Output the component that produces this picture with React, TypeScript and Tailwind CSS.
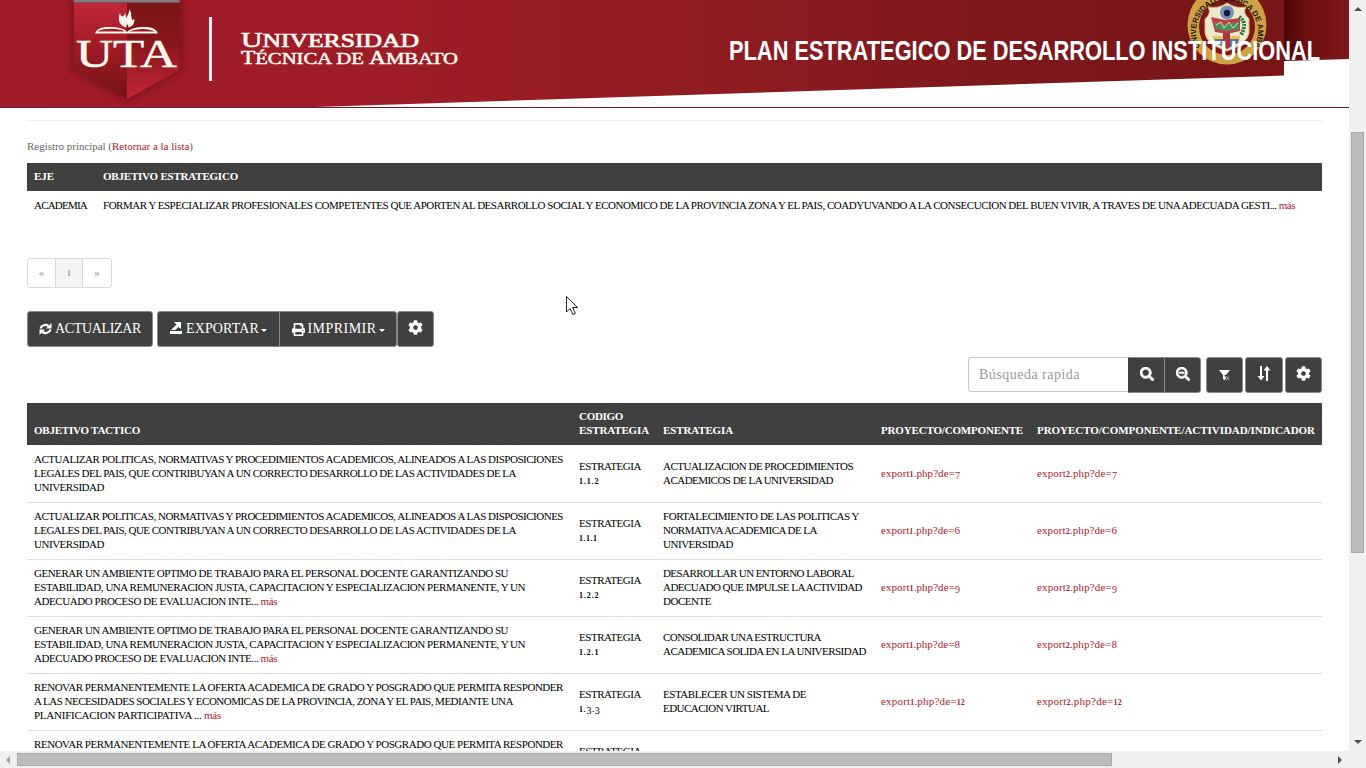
import { useLayoutEffect, useRef, useState } from 'react';
import type { ReactNode } from 'react';
import { FaCog, FaPrint, FaSearch, FaSearchMinus } from 'react-icons/fa';

/* Single text line tracked so that it occupies exactly `w` pixels. */
function Line({ w, children, className = '' }: { w: number; children: ReactNode; className?: string }) {
  const ref = useRef<HTMLSpanElement>(null);
  const [gap, setGap] = useState(0);
  useLayoutEffect(() => {
    const el = ref.current;
    if (!el) return;
    const count = (el.textContent || '').length;
    setGap((w - el.getBoundingClientRect().width) / count);
  }, [w]);
  return (
    <span className={`block whitespace-nowrap ${className}`}>
      <span ref={ref} style={{ letterSpacing: gap }}>{children}</span>
    </span>
  );
}

/* Old-style figures: 0-2 are x-height, 3-5, 7 and 9 hang below the baseline. */
function Figures({ text }: { text: string }) {
  return (
    <>
      {text.split('').map((c, i) => {
        if (/[012]/.test(c)) return <span key={i} className="text-[8px] font-bold">{c}</span>;
        if (/[34579]/.test(c)) return <span key={i} className="relative top-[2px] text-[10px]">{c}</span>;
        return <span key={i}>{c}</span>;
      })}
    </>
  );
}

const More = () => <a className="text-[#b3182d]">más</a>;

type L = [string, number, boolean?];
interface Row { goal: L[]; code: string; strategy: L[]; id: string }

const politicas: L[] = [
  ['ACTUALIZAR POLITICAS, NORMATIVAS Y PROCEDIMIENTOS ACADEMICOS, ALINEADOS A LAS DISPOSICIONES', 529],
  ['LEGALES DEL PAIS, QUE CONTRIBUYAN A UN CORRECTO DESARROLLO DE LAS ACTIVIDADES DE LA', 482],
  ['UNIVERSIDAD', 70],
];
const ambiente: L[] = [
  ['GENERAR UN AMBIENTE OPTIMO DE TRABAJO PARA EL PERSONAL DOCENTE GARANTIZANDO SU', 474],
  ['ESTABILIDAD, UNA REMUNERACION JUSTA, CAPACITACION Y ESPECIALIZACION PERMANENTE, Y UN', 491],
  ['ADECUADO PROCESO DE EVALUACION INTE... ', 243, true],
];
const oferta: L[] = [
  ['RENOVAR PERMANENTEMENTE LA OFERTA ACADEMICA DE GRADO Y POSGRADO QUE PERMITA RESPONDER', 529],
  ['A LAS NECESIDADES SOCIALES Y ECONOMICAS DE LA PROVINCIA, ZONA Y EL PAIS, MEDIANTE UNA', 479],
  ['PLANIFICACION PARTICIPATIVA ... ', 187, true],
];

const rows: Row[] = [
  { goal: politicas, code: '1.1.2', id: '7', strategy: [['ACTUALIZACION DE PROCEDIMIENTOS', 190], ['ACADEMICOS DE LA UNIVERSIDAD', 170]] },
  { goal: politicas, code: '1.1.1', id: '6', strategy: [['FORTALECIMIENTO DE LAS POLITICAS Y', 196], ['NORMATIVA ACADEMICA DE LA', 154], ['UNIVERSIDAD', 70]] },
  { goal: ambiente, code: '1.2.2', id: '9', strategy: [['DESARROLLAR UN ENTORNO LABORAL', 191], ['ADECUADO QUE IMPULSE LA ACTIVIDAD', 199], ['DOCENTE', 48]] },
  { goal: ambiente, code: '1.2.1', id: '8', strategy: [['CONSOLIDAR UNA ESTRUCTURA', 158], ['ACADEMICA SOLIDA EN LA UNIVERSIDAD', 203]] },
  { goal: oferta, code: '1.3.3', id: '12', strategy: [['ESTABLECER UN SISTEMA DE', 143], ['EDUCACION VIRTUAL', 106]] },
  { goal: oferta, code: '1.3.2', id: '11', strategy: [] },
];

function Banner() {
  return (
    <svg width="1349" height="108" viewBox="0 0 1349 108" className="block shrink-0">
      <defs>
        <linearGradient id="bg" x1="0" x2="1">
          <stop offset="0" stopColor="#a01b28" />
          <stop offset=".3" stopColor="#9e1c27" />
          <stop offset=".52" stopColor="#921c22" />
          <stop offset=".8" stopColor="#7c181b" />
          <stop offset="1" stopColor="#781517" />
        </linearGradient>
        <linearGradient id="edge" x1="0" x2="1">
          <stop offset="0" stopColor="#4c0506" />
          <stop offset=".35" stopColor="#6d1012" />
          <stop offset="1" stopColor="#7d1719" />
        </linearGradient>
        <linearGradient id="sl" x1="0" x2="0" y1="0" y2="1">
          <stop offset="0" stopColor="#c22636" />
          <stop offset=".5" stopColor="#9d1a25" />
          <stop offset="1" stopColor="#741416" />
        </linearGradient>
        <linearGradient id="sr" x1="0" x2="0" y1="0" y2="1">
          <stop offset="0" stopColor="#7a1515" />
          <stop offset=".45" stopColor="#8b161d" />
          <stop offset="1" stopColor="#c42638" />
        </linearGradient>
        <filter id="shade" x="-20%" y="-20%" width="140%" height="140%"><feGaussianBlur stdDeviation="3" /></filter>
        <path id="ring" d="M1200 47A31 31 0 1 1 1254 47" />
      </defs>
      <rect width="1349" height="108" fill="#fff" />
      <path d="M0 0H1284V75.5L300 107.5H0Z" fill="url(#bg)" />
      <path d="M1284 0H1349V59L1284 61Z" fill="url(#edge)" />
      <rect y="107" width="1349" height="1" fill="#701a2a" />
      <path d="M72 0H182V70L127 101L72 70Z" fill="#5c0d12" opacity=".6" filter="url(#shade)" />
      <path d="M74 3H127V99L74 70Z" fill="url(#sl)" />
      <path d="M127 3H179.500V70L127 99Z" fill="url(#sr)" />
      <rect x="74" width="105.500" height="2.500" fill="#827d86" />
      <g fill="#fff8ee">
        <path d="M95 33.500C97 29 101 27 108 27C117 27 124 28 127 32C131 28 137 27 145 27C152 27 156 29 158 33.500Z" />
        <path d="M98 31C105 28 119 28 125 31.500H98ZM129 31.500C137 28 149 28 155 31.500Z" fill="#9d1d26" />
        <path d="M120 13C117 20 120 26 126 27.500C128 23 126 17 125 13C124 17 121 18 120 13Z" />
        <path d="M129 9C130 14 125 17 126 22C127 25 130 27 130 27C132 24 133 20 131 16C132 13 130 11 129 9Z" />
        <path d="M134.500 19C130 21 128 25 128.500 27.500C134 26 134 23 134.500 19Z" />
      </g>
      <g fill="#fff8ee" fontFamily="'Liberation Serif', serif">
        <text x="76" y="66.500" fontSize="39" stroke="#fff8ee" strokeWidth=".5" textLength="101" lengthAdjust="spacingAndGlyphs">UTA</text>
        <rect x="209" y="17" width="3" height="64" />
        <g stroke="#fff8ee" strokeWidth=".7">
          <text x="241" y="46.500" fontSize="22" textLength="178" lengthAdjust="spacingAndGlyphs">U<tspan fontSize="19">NIVERSIDAD</tspan></text>
          <text x="241" y="64" fontSize="18" strokeWidth=".5" textLength="217" lengthAdjust="spacingAndGlyphs">T<tspan fontSize="16">ÉCNICA DE </tspan>A<tspan fontSize="16">MBATO</tspan></text>
        </g>
      </g>
      <circle cx="1227" cy="25" r="39.500" fill="#d0a044" />
      <circle cx="1227" cy="27" r="28" fill="#7d1719" />
      <text fontFamily="'Liberation Sans', sans-serif" fontSize="7.800" fontWeight="bold" fill="#20170d">
        <textPath href="#ring">UNIVERSIDAD TECNICA DE AMBATO</textPath>
      </text>
      <path d="M1208 7Q1219 9 1227 3Q1236 9 1246 7Q1242 12 1249 19V33Q1247 44 1227 51Q1206 44 1205 33V19Q1212 13 1208 7Z" fill="#eee8ce" stroke="#d5bd68" />
      <circle cx="1227" cy="12.500" r="7" fill="#7890bd" />
      <circle cx="1227" cy="13" r="3.200" fill="#101c3c" />
      <path d="M1211 17L1225 20L1240 18V31L1227 34L1215 32Z" fill="#bb4145" />
      <path d="M1214 22L1224 25L1239 22V29L1226 31L1216 29Z" fill="#489260" />
      <path d="M1216 25L1221 22L1224 28L1229 22L1233 28L1238 23" fill="none" stroke="#d3e0cc" />
      <path d="M1239 17Q1248 22 1241 35" stroke="#2a7840" strokeWidth="4" strokeDasharray="2 1" fill="none" />
      <path d="M1213 36H1240L1238 43L1227 49L1216 43Z" fill="#596da8" />
      <path d="M1213 36H1240V39H1213Z" fill="#e5c942" />
      <path d="M1223 33H1230V46L1227 49L1223 46Z" fill="#a7343d" />
      <text x="729" y="60" fontFamily="'Liberation Sans Narrow', 'Liberation Sans', sans-serif" fontSize="28" fontWeight="bold" fill="#fff" textLength="591" lengthAdjust="spacingAndGlyphs">PLAN ESTRATEGICO DE DESARROLLO INSTITUCIONAL</text>
    </svg>
  );
}

const dark = 'flex items-center justify-center border border-[#8a8a8a] bg-[#404040] text-white';

function Caret() {
  return <span className="ml-[2px] mt-[2px] border-x-[3px] border-t-[3px] border-x-transparent border-t-white" />;
}

function Toolbar() {
  return (
    <div className="mt-[23px] flex h-9 text-[14px] leading-none">
      <button className={`${dark} w-[126px] rounded-[3px]`}>
        <svg width="13" height="12" viewBox="0 0 13 12" className="mr-[3px]">
          <path d="M1.500 5.500A5 4.500 0 0 1 9.500 3M11.500 6.500A5 4.500 0 0 1 3.500 9" fill="none" stroke="currentColor" strokeWidth="2.200" />
          <path d="M12.500 0V5.500H7ZM.5 12V6.500H6Z" fill="currentColor" />
        </svg>
        <Line w={86}>ACTUALIZAR</Line>
      </button>
      <button className={`${dark} ml-1 w-[123px] rounded-l-[3px]`}>
        <svg width="12" height="12" viewBox="0 0 12 12" className="mb-[3px] mr-[4px]" fill="currentColor">
          <path d="M0 9H12V12H0ZM4 0H11V7L8.800 5L5 8H1L6.500 2.500Z" />
        </svg>
        <Line w={73}>EXPORTAR</Line><Caret />
      </button>
      <button className={`${dark} -ml-px w-[118px] rounded-r-[3px]`}>
        <FaPrint size={13} className="mr-[3px]" /><Line w={69}>IMPRIMIR</Line><Caret />
      </button>
      <button className={`${dark} w-[37px] rounded-[3px] pb-[3px]`}><FaCog size={15} /></button>
    </div>
  );
}

function SearchBar() {
  return (
    <div className="mt-[10px] flex h-9 justify-end">
      <div className="flex h-[35px] w-[160px] items-center rounded-l-[3px] border border-r-0 border-[#c8c8c8] pl-[10px] text-[14px] text-[#999]">
        <Line w={101}>Búsqueda rapida</Line>
      </div>
      <button className={`${dark} w-[37px] border-l-[#404040] pb-[3px]`}><FaSearch size={14} stroke="currentColor" strokeWidth={24} /></button>
      <button className={`${dark} -ml-px w-[37px] rounded-r-[3px] pb-[3px]`}><FaSearchMinus size={14} stroke="currentColor" strokeWidth={24} /></button>
      <button className={`${dark} ml-[5px] w-[37px] rounded-[3px]`}>
        <svg width="13" height="13" viewBox="0 0 13 13" fill="currentColor">
          <path d="M1 1H12L8 6V12L5 10V6Z" />
          <path d="M7 6L11 12M11 6.500L7 11.500" stroke="#404040" strokeWidth="1.500" />
          <path d="M8 7L11 11M11 7.500L8 11.500" stroke="#ddd" strokeWidth=".7" />
        </svg>
      </button>
      <button className={`${dark} ml-[2px] w-[38px] rounded-[3px] pb-[3px]`}>
        <svg width="14" height="15" viewBox="0 0 14 15" fill="currentColor">
          <path d="M3 0H5V10H7.500L4 14.500L.5 10H3ZM9 15H11V4.500H13.500L10 0L6.500 4.500H9Z" />
        </svg>
      </button>
      <button className={`${dark} ml-[2px] w-[37px] rounded-[3px] pb-[3px]`}><FaCog size={15} /></button>
    </div>
  );
}

const cols = 'grid grid-cols-[545px_84px_218px_156px_292px]';

function Lines({ items }: { items: L[] }) {
  return <>{items.map(([t, w, more]) => <Line key={t} w={w}>{t}{more && <More />}</Line>)}</>;
}

export default function App() {
  return (
    <div className="relative flex h-[768px] w-[1366px] flex-col overflow-hidden bg-white font-['Liberation_Serif','Noto_Serif',serif] text-[11px] leading-[14px] text-black">
      <div className="flex min-h-0 flex-1">
        <main className="h-[751px] w-[1349px] overflow-hidden">
          <Banner />
          <div className="ml-[27px] w-[1295px]">
            <div className="mt-[12px] border-t border-[#eee]" />
            <div className="mt-[18px] text-[#666]">
              <Line w={166}>Registro principal (<a className="text-[#b3182d]">Retornar a la lista</a>)</Line>
            </div>
            <div className="mt-[10px] flex h-7 items-center bg-[#404040] pb-[2px] pl-[7px] font-bold text-white">
              <div className="w-[69px]"><Line w={20}>EJE</Line></div>
              <Line w={135}>OBJETIVO ESTRATEGICO</Line>
            </div>
            <div className="flex h-7 items-center pl-[7px]">
              <div className="w-[69px]"><Line w={53}>ACADEMIA</Line></div>
              <Line w={1192}>FORMAR Y ESPECIALIZAR PROFESIONALES COMPETENTES QUE APORTEN AL DESARROLLO SOCIAL Y ECONOMICO DE LA PROVINCIA ZONA Y EL PAIS, COADYUVANDO A LA CONSECUCION DEL BUEN VIVIR, A TRAVES DE UNA ADECUADA GESTI... <More /></Line>
            </div>
            <div className="mt-[39px] flex h-[30px] w-[85px] rounded-[3px] border border-[#d9d9d9] text-[#999]">
              <span className="flex w-[27px] items-center justify-center pb-[2px]">«</span>
              <span className="flex w-[28px] items-center justify-center border-x border-[#d9d9d9] bg-[#f4f4f4] pt-[2px] text-[8px] font-bold">1</span>
              <span className="flex w-[28px] items-center justify-center pb-[2px]">»</span>
            </div>
            <Toolbar />
            <SearchBar />
            <div className={`${cols} mt-[10px] h-[42px] items-end bg-[#404040] pb-[8px] font-bold text-white`}>
              <div className="pl-[7px]"><Line w={106}>OBJETIVO TACTICO</Line></div>
              <div className="pl-[7px]"><Line w={44}>CODIGO</Line><Line w={70}>ESTRATEGIA</Line></div>
              <div className="pl-[7px]"><Line w={70}>ESTRATEGIA</Line></div>
              <div className="pl-[7px]"><Line w={142}>PROYECTO/COMPONENTE</Line></div>
              <div className="pl-[7px]"><Line w={278}>PROYECTO/COMPONENTE/ACTIVIDAD/INDICADOR</Line></div>
            </div>
            {rows.map((r, i) => (
              <div key={i} className={`${cols} h-[57px] items-center border-t pb-[2px] ${i ? 'border-[#ddd]' : 'border-transparent'}`}>
                <div className="pl-[7px]"><Lines items={r.goal} /></div>
                <div className="pl-[7px] pt-[2px]">
                  <Line w={62}>ESTRATEGIA</Line>
                  <Line w={r.code === '1.1.1' ? 18 : r.code === '1.3.3' ? 21 : 20}><Figures text={r.code} /></Line>
                </div>
                <div className="pl-[7px]"><Lines items={r.strategy} /></div>
                {['1', '2'].map((n) => (
                  <div key={n} className="pl-[7px] pt-[2px] text-[#b3182d]">
                    <Line w={(r.id.length > 1 ? 84 : 79) + (n === '2' ? 1 : 0)}>export<Figures text={n} />.php?de=<Figures text={r.id} /></Line>
                  </div>
                ))}
              </div>
            ))}
          </div>
        </main>
        <div className="flex w-[17px] flex-col items-center bg-[#f0f0f0]">
          <span className="mt-[7px] border-x-4 border-b-4 border-x-transparent border-b-[#505050]" />
          <span className="mt-[121px] h-[421px] w-[13px] border border-[#a8a8a8] bg-[#bcbcbc]" />
          <span className="mt-[187px] border-x-4 border-t-4 border-x-transparent border-t-[#505050]" />
        </div>
      </div>
      <div className="flex h-[17px] shrink-0 items-center bg-[#f0f0f0]">
        <span className="ml-[6px] border-y-4 border-r-4 border-y-transparent border-r-[#a3a3a3]" />
        <span className="ml-[7px] h-[13px] w-[1095px] border border-[#a8a8a8] bg-[#bcbcbc]" />
        <span className="ml-[226px] border-y-4 border-l-4 border-y-transparent border-l-[#505050]" />
      </div>
      <svg className="absolute left-[566px] top-[296px]" width="13" height="20" viewBox="0 0 13 20">
        <path d="M.5 .5V16L4 12.500L6.800 18.500L9.300 17.400L6.600 11.500H11.500Z" fill="#fff" stroke="#222" />
      </svg>
    </div>
  );
}
